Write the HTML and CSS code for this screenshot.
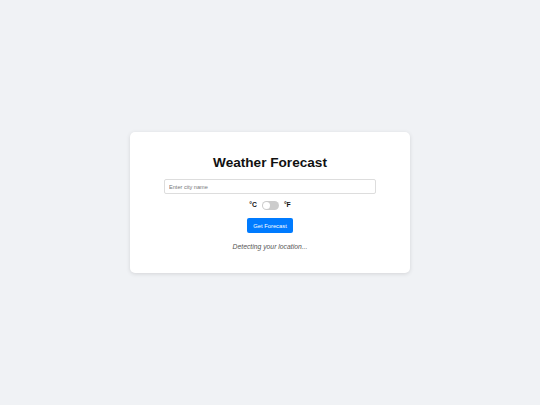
FILE: index.html
```html
<!DOCTYPE html>
<html lang="en">
<head>
<meta charset="utf-8">
<title>Weather Forecast</title>
<link rel="stylesheet" href="styles.css">
</head>
<body>
  <main class="card">
    <h1 class="title">Weather Forecast</h1>
    <input class="city" type="text" placeholder="Enter city name">
    <div class="units">
      <span class="unit">°C</span>
      <span class="switch"><span class="knob"></span></span>
      <span class="unit">°F</span>
    </div>
    <button class="btn" type="button">Get Forecast</button>
    <p class="status">Detecting your location...</p>
  </main>
</body>
</html>
```

FILE: styles.css
```css
html, body {
  margin: 0;
  padding: 0;
  height: 100%;
}
body {
  background: #f0f2f5;
  font-family: "Liberation Sans", Arial, sans-serif;
  display: flex;
  align-items: center;
  justify-content: center;
}
.card {
  width: 280px;
  height: 141px;
  box-sizing: border-box;
  padding: 23px 34px 0;
  background: #ffffff;
  border-radius: 5px;
  box-shadow: 0 1px 4px rgba(0, 0, 0, 0.12);
  display: flex;
  flex-direction: column;
  align-items: center;
}
.title {
  margin: 0;
  font-size: 13.6px;
  line-height: 16px;
  font-weight: bold;
  color: #111;
}
.city {
  margin: 8px 0 0;
  width: 212px;
  height: 15px;
  box-sizing: border-box;
  border: 1px solid #dddddd;
  border-radius: 2px;
  padding: 0 4px;
  font-family: inherit;
  font-size: 5.6px;
  color: #333;
  outline: none;
}
.city::placeholder {
  color: #777;
}
.units {
  margin-top: 6px;
  height: 10px;
  display: flex;
  align-items: center;
  gap: 5px;
}
.unit {
  font-size: 6.8px;
  font-weight: bold;
  color: #111;
  line-height: 10px;
}
.switch {
  width: 17px;
  height: 9px;
  border-radius: 5px;
  background: #cccccc;
  display: flex;
  align-items: center;
  padding: 0 1px;
  box-sizing: border-box;
}
.knob {
  width: 7px;
  height: 7px;
  border-radius: 50%;
  background: #ffffff;
}
.btn {
  margin-top: 8px;
  width: 46px;
  height: 15px;
  padding: 0;
  border: none;
  border-radius: 2px;
  background: #007bff;
  color: #fff;
  font-family: inherit;
  font-size: 5.8px;
}
.status {
  margin: 10px 0 0;
  font-size: 6.8px;
  line-height: 8px;
  font-style: italic;
  color: #555;
}
```
